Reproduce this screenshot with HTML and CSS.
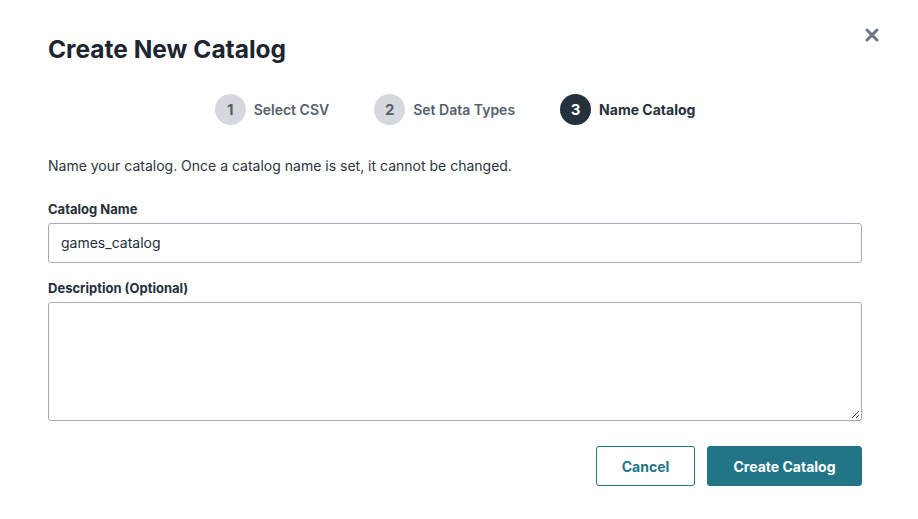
FILE: index.html
```html
<!DOCTYPE html>
<html>
<head>
<meta charset="utf-8">
<link rel="stylesheet" href="styles.css">
</head>
<body>
<div class="modal">
  <div class="header">
    <h1 class="title">Create New Catalog</h1>
    <button class="close" aria-label="Close">
      <svg width="14" height="14" viewBox="0 0 14 14"><path d="M2 2 L12 12 M12 2 L2 12" stroke="#6b7785" stroke-width="3" stroke-linecap="round"/></svg>
    </button>
  </div>
  <div class="steps">
    <div class="step"><span class="num">1</span><span class="label">Select CSV</span></div>
    <div class="step"><span class="num">2</span><span class="label">Set Data Types</span></div>
    <div class="step active"><span class="num">3</span><span class="label">Name Catalog</span></div>
  </div>
  <p class="intro">Name your catalog. Once a catalog name is set, it cannot be changed.</p>
  <label class="field-label">Catalog Name</label>
  <div class="input">games_catalog</div>
  <label class="field-label desc-label">Description (Optional)</label>
  <div class="textarea">
    <svg class="grip" width="9" height="9" viewBox="0 0 9 9"><path d="M1 8 L8 1 M5 8 L8 5" stroke="#555" stroke-width="1"/></svg>
  </div>
  <div class="actions">
    <button class="btn secondary">Cancel</button>
    <button class="btn primary">Create Catalog</button>
  </div>
</div>
</body>
</html>
```
FILE: styles.css
```css
* { box-sizing: border-box; }
html, body { margin: 0; padding: 0; background: #fff; }
body { font-family: "Inter", "Lato", sans-serif; color: #25303c; }
.modal { width: 918px; height: 519px; padding: 30px 56px 0 48px; display: flex; flex-direction: column; }
.header { display: flex; justify-content: space-between; align-items: flex-start; height: 40px; }
.title { margin: 0; font-size: 24.5px; font-weight: 700; line-height: 38px; color: #1d2530; }
.close { border: 0; background: none; padding: 0; margin: -2px -17px 0 0; width: 14px; height: 14px; cursor: pointer; }
.steps { display: flex; justify-content: center; gap: 45px; margin-top: 23px; height: 32px; align-items: center; }
.step { display: flex; align-items: center; gap: 8px; }
.num { width: 31px; height: 31px; border-radius: 50%; background: #d5d9dd; color: #56606b; font-size: 15px; font-weight: 700; display: flex; align-items: center; justify-content: center; }
.label { font-size: 14px; font-weight: 600; color: #56606b; }
.step.active .num { background: #25313d; color: #fff; }
.step.active .label { color: #25303c; font-weight: 700; }
.intro { margin: 31px 0 0; font-size: 14px; line-height: 20px; color: #2c3440; }
.field-label { display: block; font-size: 13px; font-weight: 700; color: #25303c; line-height: 18px; margin-top: 24px; }
.input { margin-top: 5px; height: 40px; border: 1px solid #a3acb5; border-radius: 3px; padding: 0 12px; font-size: 14px; line-height: 38px; color: #25303c; }
.desc-label { margin-top: 16px; }
.textarea { margin-top: 5px; height: 119px; border: 1px solid #a3acb5; border-radius: 3px; position: relative; }
.grip { position: absolute; right: 1px; bottom: 1px; }
.actions { display: flex; justify-content: flex-end; gap: 12px; margin-top: 25px; }
.btn { height: 40px; border-radius: 3px; font-family: inherit; font-size: 14px; font-weight: 700; cursor: pointer; }
.secondary { width: 99px; background: #fff; border: 1px solid #217587; color: #217587; }
.primary { width: 155px; background: #217587; border: 1px solid #217587; color: #fff; }
```
